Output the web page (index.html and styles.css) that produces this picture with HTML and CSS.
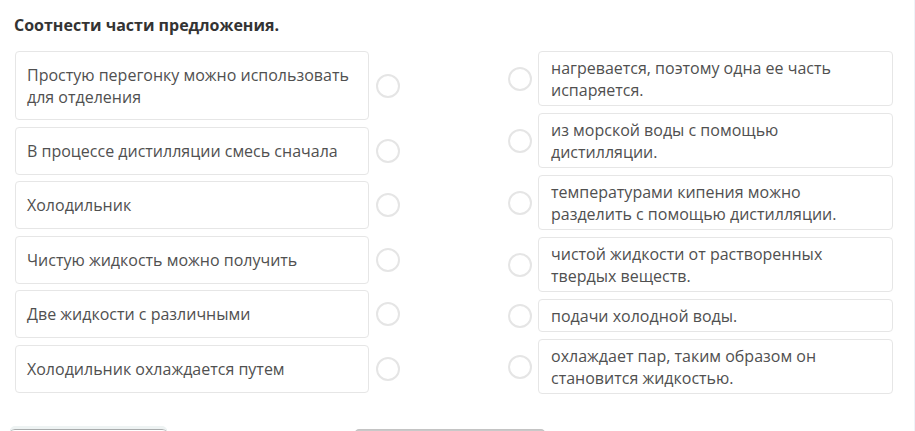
FILE: index.html
```html
<!DOCTYPE html>
<html lang="ru">
<head>
<meta charset="utf-8">
<title>Соотнести части предложения</title>
<link rel="stylesheet" href="styles.css">
</head>
<body>
<div class="page">
  <h1 class="title">Соотнести части предложения.</h1>
  <div class="match">
    <div class="col col-left">
      <div class="item"><div class="box tall">Простую перегонку можно использовать для отделения</div><span class="radio"></span></div>
      <div class="item"><div class="box">В процессе дистилляции смесь сначала</div><span class="radio"></span></div>
      <div class="item"><div class="box">Холодильник</div><span class="radio"></span></div>
      <div class="item"><div class="box">Чистую жидкость можно получить</div><span class="radio"></span></div>
      <div class="item"><div class="box">Две жидкости с различными</div><span class="radio"></span></div>
      <div class="item"><div class="box">Холодильник охлаждается путем</div><span class="radio"></span></div>
    </div>
    <div class="col col-right">
      <div class="item"><span class="radio"></span><div class="box">нагревается, поэтому одна ее часть испаряется.</div></div>
      <div class="item"><span class="radio"></span><div class="box">из морской воды с помощью дистилляции.</div></div>
      <div class="item"><span class="radio"></span><div class="box">температурами кипения можно разделить с помощью дистилляции.</div></div>
      <div class="item"><span class="radio"></span><div class="box">чистой жидкости от растворенных твердых веществ.</div></div>
      <div class="item"><span class="radio"></span><div class="box">подачи холодной воды.</div></div>
      <div class="item"><span class="radio"></span><div class="box">охлаждает пар, таким образом он становится жидкостью.</div></div>
    </div>
  </div>
  <div class="actions">
    <button class="btn btn-light" type="button" aria-label="Назад"></button>
    <button class="btn btn-gray" type="button" aria-label="Проверить"></button>
  </div>
</div>
<div class="edge"></div>
</body>
</html>
```
FILE: styles.css
```css
html, body {
  margin: 0;
  padding: 0;
  background: #fff;
  height: 100%;
  overflow: hidden;
}
body {
  font-family: "Open Sans", "Noto Sans", sans-serif;
  color: #505050;
  position: relative;
}
.page {
  padding: 14px 22px 0 15px;
  width: 878px;
}
.title {
  margin: 0 0 15px -1px;
  font-size: 16px;
  font-weight: 700;
  line-height: 22px;
  color: #333;
}
.match {
  display: flex;
  justify-content: space-between;
  align-items: flex-start;
}
.col {
  display: flex;
  flex-direction: column;
  gap: 7px;
  width: 385px;
}
.col-left { gap: 6.6px; }
.item {
  display: flex;
  align-items: center;
}
.col-left .item { gap: 7px; }
.col-right .item { gap: 6px; }
.box {
  box-sizing: border-box;
  border: 1px solid #e6e6e6;
  border-radius: 4px;
  font-size: 16px;
  line-height: 22px;
  background: #fff;
}
.col-left .box {
  width: 354px;
  padding: 12px 11px;
}
.col-left .box.tall {
  padding-top: 12px;
  padding-bottom: 11px;
}
.col-right .box {
  width: 355px;
  padding: 4.5px 12px;
}
.radio {
  flex: none;
  box-sizing: border-box;
  width: 24px;
  height: 24px;
  border: 2px solid #e5e5e5;
  border-radius: 50%;
  background: #fff;
}
.actions {
  display: flex;
  gap: 187px;
  margin-top: 32px;
  margin-left: -5px;
}
.btn {
  box-sizing: border-box;
  height: 40px;
  border-radius: 5px;
  padding: 0;
}
.btn-light {
  width: 157px;
  background: #fff;
  border: 1px solid #e4eaea;
  border-top: 3px solid #eef3f3;
  box-shadow: inset 0 1px 0 #a9acad;
}
.btn-gray {
  width: 192px;
  margin-top: 3px;
  background: #c9c9c9;
  border: 1px solid #c4c4c4;
}
.edge {
  position: absolute;
  top: 0;
  right: 0;
  width: 1px;
  height: 100%;
  background: #eef3f8;
}
```
